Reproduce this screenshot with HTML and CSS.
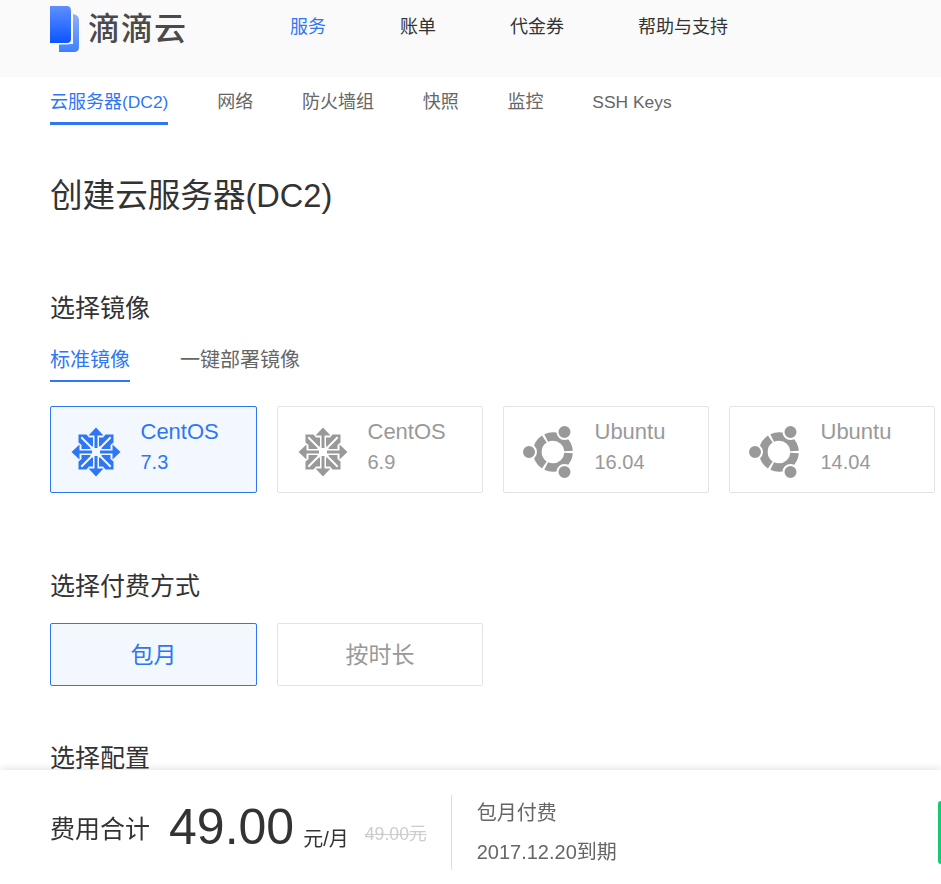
FILE: index.html
```html
<!DOCTYPE html>
<html lang="zh-CN">
<head>
<meta charset="utf-8">
<title>创建云服务器(DC2)</title>
<link rel="stylesheet" href="styles.css">
</head>
<body>
<svg class="defs" width="0" height="0" aria-hidden="true">
  <symbol id="centos" viewBox="0 0 60 60">
    <g transform="translate(1 0)">
      <g id="c-quad">
        <polygon points="30,5.5 37.5,13.5 31.5,13.5 31.5,26 28.5,26 28.5,13.5 22.5,13.5"/>
        <polygon points="12.5,12.5 20.5,12.5 23,15.5 27,15.5 27,24 26.2,24.8 16,14.6 14.6,16 24.8,26.2 24,27 15.5,27 15.5,23 12.5,20.5"/>
      </g>
      <use href="#c-quad" transform="rotate(90 30 30)"/>
      <use href="#c-quad" transform="rotate(180 30 30)"/>
      <use href="#c-quad" transform="rotate(270 30 30)"/>
    </g>
  </symbol>
  <symbol id="ubuntu" viewBox="0 0 60 60">
    <circle class="ring" cx="35" cy="30" r="15.6" pathLength="360"/>
    <circle class="halo" cx="11" cy="30" r="7"/>
    <circle class="halo" cx="46.5" cy="10" r="7"/>
    <circle class="halo" cx="46.5" cy="50" r="7"/>
  </symbol>
</svg>

<header class="topbar">
  <div class="brand">
    <svg class="logo" width="30" height="47" viewBox="0 0 30 47" aria-hidden="true">
      <defs>
        <linearGradient id="lg-a" x1="0" y1="0" x2="0" y2="1"><stop offset="0" stop-color="#5f8fff"/><stop offset="1" stop-color="#0a55ff"/></linearGradient>
        <linearGradient id="lg-b" x1="0" y1="0" x2="0" y2="1"><stop offset="0" stop-color="#8fb0f5"/><stop offset="1" stop-color="#3f7fff"/></linearGradient>
      </defs>
      <path d="M23 8 Q29 9 29 14 V41 Q29 46 24 46 H9 V38 H23 Z" fill="url(#lg-b)"/>
      <path d="M0 0 H17 Q21 0 21 5 V33 Q21 37 17 37 H0 Z" fill="none" stroke="#fafafa" stroke-width="3"/>
      <path d="M0 0 H17 Q21 0 21 5 V33 Q21 37 17 37 H0 Z" fill="url(#lg-a)"/>
    </svg>
    <span class="brand-name">滴滴云</span>
  </div>
  <nav class="main-nav">
    <a class="main-link is-active">服务</a>
    <a class="main-link">账单</a>
    <a class="main-link">代金券</a>
    <a class="main-link">帮助与支持</a>
  </nav>
</header>

<nav class="sub-nav">
  <a class="sub-link is-active">云服务器<span class="latin">(DC2)</span></a>
  <a class="sub-link">网络</a>
  <a class="sub-link">防火墙组</a>
  <a class="sub-link">快照</a>
  <a class="sub-link">监控</a>
  <a class="sub-link"><span class="latin">SSH Keys</span></a>
</nav>

<main class="content">
  <h1 class="page-title">创建云服务器(DC2)</h1>

  <section class="section section-image">
    <h2 class="section-title">选择镜像</h2>
    <div class="image-tabs">
      <a class="image-tab is-active">标准镜像</a>
      <a class="image-tab">一键部署镜像</a>
    </div>
    <div class="option-grid">
      <div class="image-card is-selected">
        <svg class="os-icon"><use href="#centos"/></svg>
        <div class="os-text"><span class="os-name">CentOS</span><span class="os-version">7.3</span></div>
      </div>
      <div class="image-card">
        <svg class="os-icon"><use href="#centos"/></svg>
        <div class="os-text"><span class="os-name">CentOS</span><span class="os-version">6.9</span></div>
      </div>
      <div class="image-card">
        <svg class="os-icon"><use href="#ubuntu"/></svg>
        <div class="os-text ubuntu-text"><span class="os-name">Ubuntu</span><span class="os-version">16.04</span></div>
      </div>
      <div class="image-card">
        <svg class="os-icon"><use href="#ubuntu"/></svg>
        <div class="os-text ubuntu-text"><span class="os-name">Ubuntu</span><span class="os-version">14.04</span></div>
      </div>
    </div>
  </section>

  <section class="section section-pay">
    <h2 class="section-title">选择付费方式</h2>
    <div class="option-grid pay-grid">
      <div class="pay-option is-selected">包月</div>
      <div class="pay-option">按时长</div>
    </div>
  </section>

  <section class="section section-config">
    <h2 class="section-title">选择配置</h2>
  </section>
</main>

<footer class="summary">
  <span class="summary-label">费用合计</span>
  <span class="summary-price">49.00</span>
  <span class="summary-unit">元/月</span>
  <span class="summary-old">49.00元</span>
  <div class="summary-detail">
    <span>包月付费</span>
    <span>2017.12.20到期</span>
  </div>
  <div class="summary-submit"></div>
</footer>
</body>
</html>
```

FILE: styles.css
```css
* { box-sizing: border-box; }
html, body { height: 100%; overflow: hidden; }
body {
  margin: 0;
  background: #fff;
  color: #333;
  font-family: "Liberation Sans", "Noto Sans CJK SC", sans-serif;
}
a { display: block; }
.defs { position: absolute; }

.topbar {
  height: 77px;
  background: #fafafa;
  display: flex;
  align-items: flex-start;
  padding-left: 50px;
}
.brand { width: 240px; display: flex; padding-top: 6px; }
.logo { flex: none; }
.brand-name {
  margin-left: 8px;
  font-size: 32px;
  line-height: 46px;
  letter-spacing: 1px;
  font-weight: 500;
  color: #4a4a4a;
}
.main-nav { display: flex; gap: 74px; padding-top: 14px; }
.main-link { font-size: 18px; line-height: 26px; color: #333; }
.main-link.is-active { color: #2f76f5; }

.sub-nav {
  height: 48px;
  display: flex;
  gap: 48.8px;
  padding-left: 50px;
}
.sub-link {
  font-size: 18px;
  line-height: 50px;
  color: #666;
}
.latin { font-size: 17.4px; }
.sub-link.is-active { color: #2f76f5; border-bottom: 3px solid #2f76f5; }

.content { padding: 0 6px 0 50px; }
.page-title {
  margin: 46px 0 0;
  font-size: 32.6px;
  line-height: 50px;
  font-weight: 400;
  color: #333;
}
.section-title {
  margin: 0;
  font-size: 25px;
  line-height: 36px;
  font-weight: 400;
  color: #333;
}
.section-image { margin-top: 69px; }
.image-tabs { display: flex; gap: 50px; margin-top: 16px; }
.image-tab {
  height: 40px;
  font-size: 20px;
  line-height: 36px;
  color: #666;
}
.image-tab.is-active { color: #2f76f5; border-bottom: 2px solid #2f76f5; }

.option-grid {
  display: grid;
  grid-template-columns: 207px 206px 206px 206px;
  gap: 20px;
  margin-top: 24px;
}
.image-card {
  height: 87px;
  display: flex;
  align-items: center;
  padding-left: 14px;
  border: 1px solid #e3e3e3;
  border-radius: 2px;
  color: #999;
}
.image-card.is-selected, .pay-option.is-selected {
  background: #f3f8ff;
  border-color: #2f76f5;
  color: #2f76f5;
}
.os-icon { width: 60px; height: 60px; margin-top: 5px; flex: none; fill: currentColor; }
.os-text { display: flex; flex-direction: column; margin-left: 15.5px; padding-bottom: 5px; }
.ubuntu-text { margin-left: 16.5px; }
.os-name { font-size: 22px; line-height: 31px; }
.os-version { font-size: 20px; line-height: 31px; }
.ring {
  fill: none;
  stroke: #999;
  stroke-width: 8.5;
  stroke-dasharray: 112 8;
  stroke-dashoffset: -4;
}
.halo { fill: #999; stroke: #fff; stroke-width: 2; }

.section-pay { margin-top: 75px; }
.pay-grid { margin-top: 19px; }
.pay-option {
  height: 63px;
  display: flex;
  align-items: center;
  justify-content: center;
  padding-bottom: 3px;
  border: 1px solid #e3e3e3;
  border-radius: 2px;
  font-size: 23px;
  color: #999;
}
.section-config { margin-top: 54px; }

.summary {
  position: fixed;
  left: 0;
  right: 0;
  bottom: 0;
  height: 114px;
  display: flex;
  align-items: center;
  padding-left: 50px;
  background: #fff;
  box-shadow: 0 -1px 8px rgba(0, 0, 0, .12);
}
.summary-label { font-size: 25px; color: #333; }
.summary-price { margin-left: 19px; font-size: 50px; color: #333; }
.summary-unit { margin: 20px 0 0 9px; font-size: 20px; color: #333; }
.summary-old {
  margin: 10px 0 0 16px;
  font-size: 17.7px;
  color: #ccc;
  text-decoration: line-through;
}
.summary-detail {
  height: 75px;
  margin: 11px 0 0 24px;
  padding-left: 25px;
  border-left: 1px solid #ddd;
  display: flex;
  flex-direction: column;
  justify-content: space-between;
  font-size: 20px;
  line-height: 36px;
  color: #666;
}
.summary-submit {
  width: 3px;
  height: 63px;
  margin: 10px 0 0 auto;
  background: #0ccf74;
  border-radius: 3px 0 0 3px;
}
```
